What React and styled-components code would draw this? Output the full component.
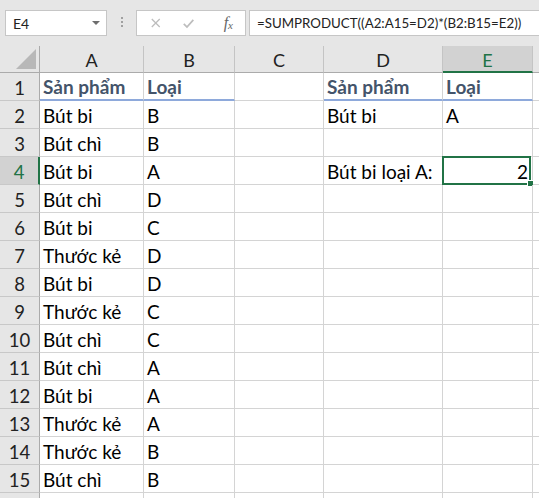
import React from "react";
import styled, { createGlobalStyle, css } from "styled-components";

const GlobalStyle = createGlobalStyle`
  html, body {
    margin: 0;
    padding: 0;
    background: #ffffff;
    overflow: hidden;
  }
  body {
    font-family: Lato, "Liberation Sans", sans-serif;
  }
`;

const COLS = ["A", "B", "C", "D", "E"];

const rows = [
  { n: 1, A: "Sản phẩm", B: "Loại", D: "Sản phẩm", E: "Loại", head: true },
  { n: 2, A: "Bút bi", B: "B", D: "Bút bi", E: "A" },
  { n: 3, A: "Bút chì", B: "B" },
  { n: 4, A: "Bút bi", B: "A", D: "Bút bi loại A:", E: "2" },
  { n: 5, A: "Bút chì", B: "D" },
  { n: 6, A: "Bút bi", B: "C" },
  { n: 7, A: "Thước kẻ", B: "D" },
  { n: 8, A: "Bút bi", B: "D" },
  { n: 9, A: "Thước kẻ", B: "C" },
  { n: 10, A: "Bút chì", B: "C" },
  { n: 11, A: "Bút chì", B: "A" },
  { n: 12, A: "Bút bi", B: "A" },
  { n: 13, A: "Thước kẻ", B: "A" },
  { n: 14, A: "Thước kẻ", B: "B" },
  { n: 15, A: "Bút chì", B: "B" },
  { n: 16, hidden: true },
];

const App = () => {
  return (
    <>
      <GlobalStyle />
      <Toolbar>
        <NameBox>
          <span>E4</span>
          <Caret />
        </NameBox>
        <Grip>
          <i />
          <i />
          <i />
        </Grip>
        <FxButtons>
          <svg width="12" height="12" viewBox="0 0 12 12">
            <path d="M1 1 L11 11 M11 1 L1 11" stroke="#bdbdbd" strokeWidth="1.6" fill="none" />
          </svg>
          <svg width="14" height="11" viewBox="0 0 14 11">
            <path d="M1 6 L5 10 L13 1" stroke="#bdbdbd" strokeWidth="2.2" fill="none" />
          </svg>
          <FxLabel>
            f<sub>x</sub>
          </FxLabel>
        </FxButtons>
        <FormulaInput>=SUMPRODUCT((A2:A15=D2)*(B2:B15=E2))</FormulaInput>
      </Toolbar>

      <Sheet>
        <Corner>
          <svg width="20" height="20" viewBox="0 0 20 20">
            <polygon points="20,0 20,20 0,20" fill="#b8b8b8" />
          </svg>
        </Corner>
        {COLS.map((c) => (
          <ColHead key={c} $active={c === "E"}>
            {c}
          </ColHead>
        ))}
        <ColHead $last />

        {rows.map((r) => (
          <React.Fragment key={r.n}>
            <RowHead $active={r.n === 4}>{r.hidden ? "" : r.n}</RowHead>
            {COLS.map((c) => (
              <Cell
                key={c}
                $head={r.head && c !== "C"}
                $right={r.n === 4 && c === "E"}
                $selected={r.n === 4 && c === "E"}
              >
                {r[c] || ""}
              </Cell>
            ))}
            <Cell $last />
          </React.Fragment>
        ))}
      </Sheet>
    </>
  );
};

const Toolbar = styled.div`
  display: flex;
  align-items: flex-start;
  height: 46px;
  box-sizing: border-box;
  padding: 10px 0 0 5px;
  background: #e6e6e6;
`;

const boxBase = css`
  box-sizing: border-box;
  height: 26px;
  background: #ffffff;
  border: 1px solid #c6c6c6;
`;

const NameBox = styled.div`
  ${boxBase};
  width: 102px;
  display: flex;
  align-items: center;
  justify-content: space-between;
  padding: 0 6px 0 7px;
  font-size: 14px;
  color: #222;
`;

const Caret = styled.span`
  width: 0;
  height: 0;
  border-left: 4px solid transparent;
  border-right: 4px solid transparent;
  border-top: 4px solid #6e6e6e;
`;

const Grip = styled.div`
  display: flex;
  flex-direction: column;
  gap: 2px;
  margin: 7px 13px 0 14px;

  i {
    display: block;
    width: 2px;
    height: 2px;
    background: #a0a0a0;
  }
`;

const FxButtons = styled.div`
  ${boxBase};
  width: 110px;
  display: flex;
  align-items: center;
  padding: 0 12px 0 14px;
  gap: 22px;

  svg {
    display: block;
  }
`;

const FxLabel = styled.span`
  margin-left: 8px;
  font-family: "Liberation Serif", serif;
  font-style: italic;
  font-size: 16px;
  color: #666;

  sub {
    font-size: 11px;
    vertical-align: -1px;
  }
`;

const FormulaInput = styled.div`
  ${boxBase};
  flex: 1;
  margin-left: 3px;
  border-right: none;
  padding: 0 0 0 7px;
  line-height: 24px;
  font-size: 13.3px;
  color: #222;
  white-space: nowrap;
  overflow: hidden;
`;

const Sheet = styled.div`
  display: grid;
  grid-template-columns: 40px 104px 91px 89px 119px 90px 1fr;
  grid-template-rows: 27px repeat(16, 28px);
  background: #ffffff;
`;

const headBase = css`
  box-sizing: border-box;
  background: #e6e6e6;
  color: #222;
  display: flex;
  align-items: center;
  justify-content: center;
`;

const Corner = styled.div`
  ${headBase};
  border-right: 1px solid #ababab;
  border-bottom: 1px solid #ababab;
  justify-content: flex-end;
  align-items: flex-end;
  padding: 0 3px 3px 0;

  svg {
    display: block;
  }
`;

const ColHead = styled.div`
  ${headBase};
  font-size: 18px;
  padding-top: 2px;
  border-right: ${({ $last }) => ($last ? "none" : "1px solid #c4c4c4")};
  border-bottom: 1px solid #ababab;
  ${({ $active }) =>
    $active &&
    css`
      background: #d2d2d2;
      color: #217346;
      border-bottom: 2px solid #217346;
    `}
`;

const RowHead = styled.div`
  ${headBase};
  font-size: 18.5px;
  padding-top: 2px;
  border-right: 1px solid #ababab;
  border-bottom: 1px solid #c8c8c8;
  ${({ $active }) =>
    $active &&
    css`
      background: #d2d2d2;
      color: #217346;
      border-right: 2px solid #217346;
    `}
`;

const Cell = styled.div`
  position: relative;
  box-sizing: border-box;
  display: flex;
  align-items: flex-end;
  justify-content: ${({ $right }) => ($right ? "flex-end" : "flex-start")};
  padding: 0 4px 0 3px;
  font-size: 19px;
  line-height: 24px;
  color: #000;
  white-space: nowrap;
  border-right: ${({ $last }) => ($last ? "none" : "1px solid #d4d4d4")};
  border-bottom: 1px solid #d4d4d4;

  ${({ $head }) =>
    $head &&
    css`
      font-weight: 700;
      color: #44546a;
      border-bottom: 2px solid #8ea9db;
      padding-bottom: 0;
    `}

  ${({ $selected }) =>
    $selected &&
    css`
      &::before {
        content: "";
        position: absolute;
        left: -1px;
        top: -1px;
        right: 1px;
        bottom: -1px;
        border: 2px solid #217346;
      }
      &::after {
        content: "";
        position: absolute;
        right: -2px;
        bottom: -3px;
        width: 5px;
        height: 5px;
        background: #217346;
        border: 1px solid #ffffff;
      }
    `}
`;

export default App;
